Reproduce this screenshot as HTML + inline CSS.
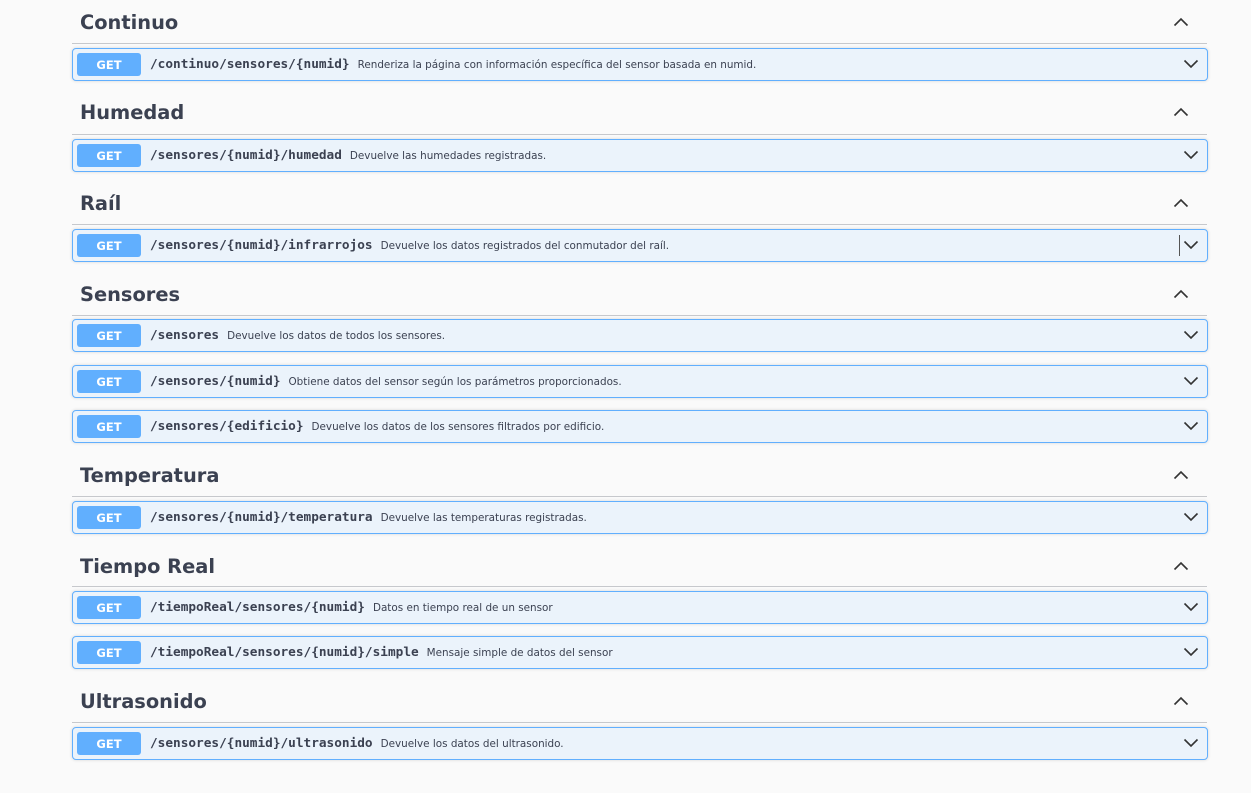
<!DOCTYPE html>
<html><head><meta charset="utf-8"><style>
*{margin:0;padding:0;box-sizing:border-box}
body{width:1251px;height:793px;background:#fafafa;font-family:"DejaVu Sans","Liberation Sans",sans-serif;color:#3b4151;position:relative;overflow:hidden}
.h{position:absolute;left:80px;font-size:19.4px;font-weight:bold;line-height:26px;color:#3b4151}
.hr{position:absolute;left:72px;width:1135px;height:1px;background:#c6c8cc}
.up{position:absolute;left:1173px;width:16px;height:10px}
.op{position:absolute;left:72px;width:1136px;height:33px;border:1px solid #61affe;border-radius:4px;background:#ebf3fb;box-shadow:0 0 3px rgba(0,0,0,.15)}
.get{position:absolute;left:4px;top:4px;width:64px;height:23px;background:#61affe;border-radius:3px;color:#fff;font-size:11.5px;font-weight:bold;text-align:center;line-height:24px}
.p{position:absolute;left:77px;top:0;line-height:32px;font-family:"DejaVu Sans Mono","Liberation Mono",monospace;font-weight:bold;font-size:12.75px;color:#3b4151;white-space:nowrap}
.p span{font-family:"DejaVu Sans","Liberation Sans",sans-serif;font-weight:normal;font-size:10.4px;margin-left:8px}
.dn{position:absolute;right:8px;top:10px;width:16px;height:10px}
</style></head><body>
<svg width="0" height="0" style="position:absolute"><defs>
<symbol id="u" viewBox="0 0 16 10"><path d="M1.5 8.5 L8 2 L14.5 8.5" fill="none" stroke="#333" stroke-width="1.6"/></symbol>
<symbol id="d" viewBox="0 0 16 10"><path d="M1.5 1.5 L8 8 L14.5 1.5" fill="none" stroke="#333" stroke-width="1.6"/></symbol>
</defs></svg>

<div class="h" style="top:10px">Continuo</div><svg class="up" style="top:17px"><use href="#u"/></svg><div class="hr" style="top:43px"></div>
<div class="op" style="top:48px"><div class="get">GET</div><div class="p">/continuo/sensores/{numid}<span>Renderiza la página con información específica del sensor basada en numid.</span></div><svg class="dn"><use href="#d"/></svg></div>

<div class="h" style="top:100px">Humedad</div><svg class="up" style="top:107px"><use href="#u"/></svg><div class="hr" style="top:134px"></div>
<div class="op" style="top:139px"><div class="get">GET</div><div class="p">/sensores/{numid}/humedad<span>Devuelve las humedades registradas.</span></div><svg class="dn"><use href="#d"/></svg></div>

<div class="h" style="top:191px">Raíl</div><svg class="up" style="top:198px"><use href="#u"/></svg><div class="hr" style="top:224px"></div>
<div class="op" style="top:229px"><div class="get">GET</div><div class="p">/sensores/{numid}/infrarrojos<span>Devuelve los datos registrados del conmutador del raíl.</span></div><div style="position:absolute;right:27px;top:5px;width:1px;height:21px;background:#555"></div><svg class="dn"><use href="#d"/></svg></div>

<div class="h" style="top:282px">Sensores</div><svg class="up" style="top:289px"><use href="#u"/></svg><div class="hr" style="top:315px"></div>
<div class="op" style="top:319px"><div class="get">GET</div><div class="p">/sensores<span>Devuelve los datos de todos los sensores.</span></div><svg class="dn"><use href="#d"/></svg></div>
<div class="op" style="top:365px"><div class="get">GET</div><div class="p">/sensores/{numid}<span>Obtiene datos del sensor según los parámetros proporcionados.</span></div><svg class="dn"><use href="#d"/></svg></div>
<div class="op" style="top:410px"><div class="get">GET</div><div class="p">/sensores/{edificio}<span>Devuelve los datos de los sensores filtrados por edificio.</span></div><svg class="dn"><use href="#d"/></svg></div>

<div class="h" style="top:463px">Temperatura</div><svg class="up" style="top:470px"><use href="#u"/></svg><div class="hr" style="top:496px"></div>
<div class="op" style="top:501px"><div class="get">GET</div><div class="p">/sensores/{numid}/temperatura<span>Devuelve las temperaturas registradas.</span></div><svg class="dn"><use href="#d"/></svg></div>

<div class="h" style="top:554px">Tiempo Real</div><svg class="up" style="top:561px"><use href="#u"/></svg><div class="hr" style="top:586px"></div>
<div class="op" style="top:591px"><div class="get">GET</div><div class="p">/tiempoReal/sensores/{numid}<span>Datos en tiempo real de un sensor</span></div><svg class="dn"><use href="#d"/></svg></div>
<div class="op" style="top:636px"><div class="get">GET</div><div class="p">/tiempoReal/sensores/{numid}/simple<span>Mensaje simple de datos del sensor</span></div><svg class="dn"><use href="#d"/></svg></div>

<div class="h" style="top:689px">Ultrasonido</div><svg class="up" style="top:696px"><use href="#u"/></svg><div class="hr" style="top:722px"></div>
<div class="op" style="top:727px"><div class="get">GET</div><div class="p">/sensores/{numid}/ultrasonido<span>Devuelve los datos del ultrasonido.</span></div><svg class="dn"><use href="#d"/></svg></div>
</body></html>
